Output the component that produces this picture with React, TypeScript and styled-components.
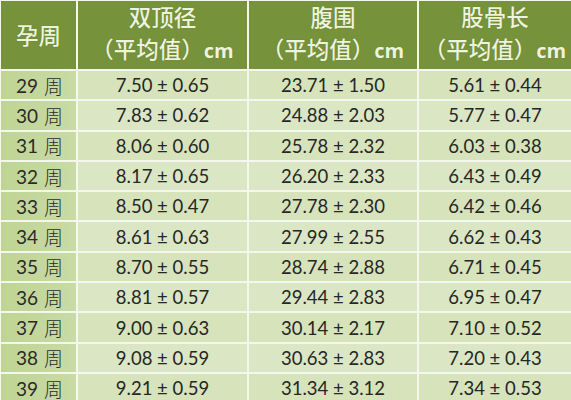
import styled, { createGlobalStyle } from "styled-components"

const GlobalStyle = createGlobalStyle`
    html, body {
        margin: 0;
        padding: 0;
        background: #f4f7ec;
        overflow: hidden;
    }
`

const rows = [
    ["29", "7.50 ± 0.65", "23.71 ± 1.50", "5.61 ± 0.44"],
    ["30", "7.83 ± 0.62", "24.88 ± 2.03", "5.77 ± 0.47"],
    ["31", "8.06 ± 0.60", "25.78 ± 2.32", "6.03 ± 0.38"],
    ["32", "8.17 ± 0.65", "26.20 ± 2.33", "6.43 ± 0.49"],
    ["33", "8.50 ± 0.47", "27.78 ± 2.30", "6.42 ± 0.46"],
    ["34", "8.61 ± 0.63", "27.99 ± 2.55", "6.62 ± 0.43"],
    ["35", "8.70 ± 0.55", "28.74 ± 2.88", "6.71 ± 0.45"],
    ["36", "8.81 ± 0.57", "29.44 ± 2.83", "6.95 ± 0.47"],
    ["37", "9.00 ± 0.63", "30.14 ± 2.17", "7.10 ± 0.52"],
    ["38", "9.08 ± 0.59", "30.63 ± 2.83", "7.20 ± 0.43"],
    ["39", "9.21 ± 0.59", "31.34 ± 3.12", "7.34 ± 0.53"],
]

const heads = ["双顶径", "腹围", "股骨长"]

function App() {
    return (
        <>
            <GlobalStyle />
            <Table>
                <HeadCell>
                    <HeadText>孕周</HeadText>
                </HeadCell>
                {heads.map((h) => (
                    <HeadCell key={h}>
                        <HeadText>{h}</HeadText>
                        <HeadText>
                            （平均值）<Unit>cm</Unit>
                        </HeadText>
                    </HeadCell>
                ))}
                {rows.map((r, i) => (
                    <Row key={r[0]}>
                        <WeekCell>
                            {r[0]} <Zhou>周</Zhou>
                        </WeekCell>
                        <ValueCell alt={i % 2 === 1}>{r[1]}</ValueCell>
                        <ValueCell alt={i % 2 === 1}>{r[2]}</ValueCell>
                        <ValueCell alt={i % 2 === 1}>{r[3]}</ValueCell>
                    </Row>
                ))}
            </Table>
        </>
    )
}

export default App

const Table = styled.div`
    display: grid;
    grid-template-columns: 75px 169px 168px 1fr;
    grid-template-rows: 68px;
    grid-auto-rows: 28.3px;
    gap: 2px;
    padding: 1px 0 0 1px;
    width: 571px;
    height: 400px;
    box-sizing: border-box;
    overflow: hidden;
    background: #f4f7ec;
`

const HeadCell = styled.div`
    background: #76933c;
    display: flex;
    flex-direction: column;
    justify-content: center;
    align-items: center;
    gap: 2px;
    padding-bottom: 3px;
    box-sizing: border-box;
    color: #eef3dc;
    font-family: "Noto Sans CJK SC", sans-serif;
    font-size: 22.5px;
    font-weight: 500;
    text-shadow: 0 0 1px rgba(60, 80, 20, 0.5);
`

const HeadText = styled.div`
    line-height: 30px;
    white-space: nowrap;
`

const Unit = styled.span`
    font-family: "Open Sans", sans-serif;
    font-weight: 700;
    font-size: 20px;
`

const Row = styled.div`
    display: contents;
`

const WeekCell = styled.div`
    background: linear-gradient(90deg, #bfd494 0%, #c9dba6 100%);
    display: flex;
    align-items: center;
    gap: 6px;
    padding-left: 15px;
    color: #2a2a2a;
    font-family: "Lato", sans-serif;
    font-size: 19px;
`

const Zhou = styled.span`
    font-family: "Noto Sans CJK SC", sans-serif;
    font-weight: 300;
    font-size: 19px;
`

const ValueCell = styled.div<{ alt?: boolean }>`
    background: ${({ alt }) => (alt ? "#dbe6c4" : "#d6e3bb")};
    display: flex;
    align-items: center;
    justify-content: center;
    color: #262626;
    font-family: "Lato", sans-serif;
    font-size: 18.5px;
`
